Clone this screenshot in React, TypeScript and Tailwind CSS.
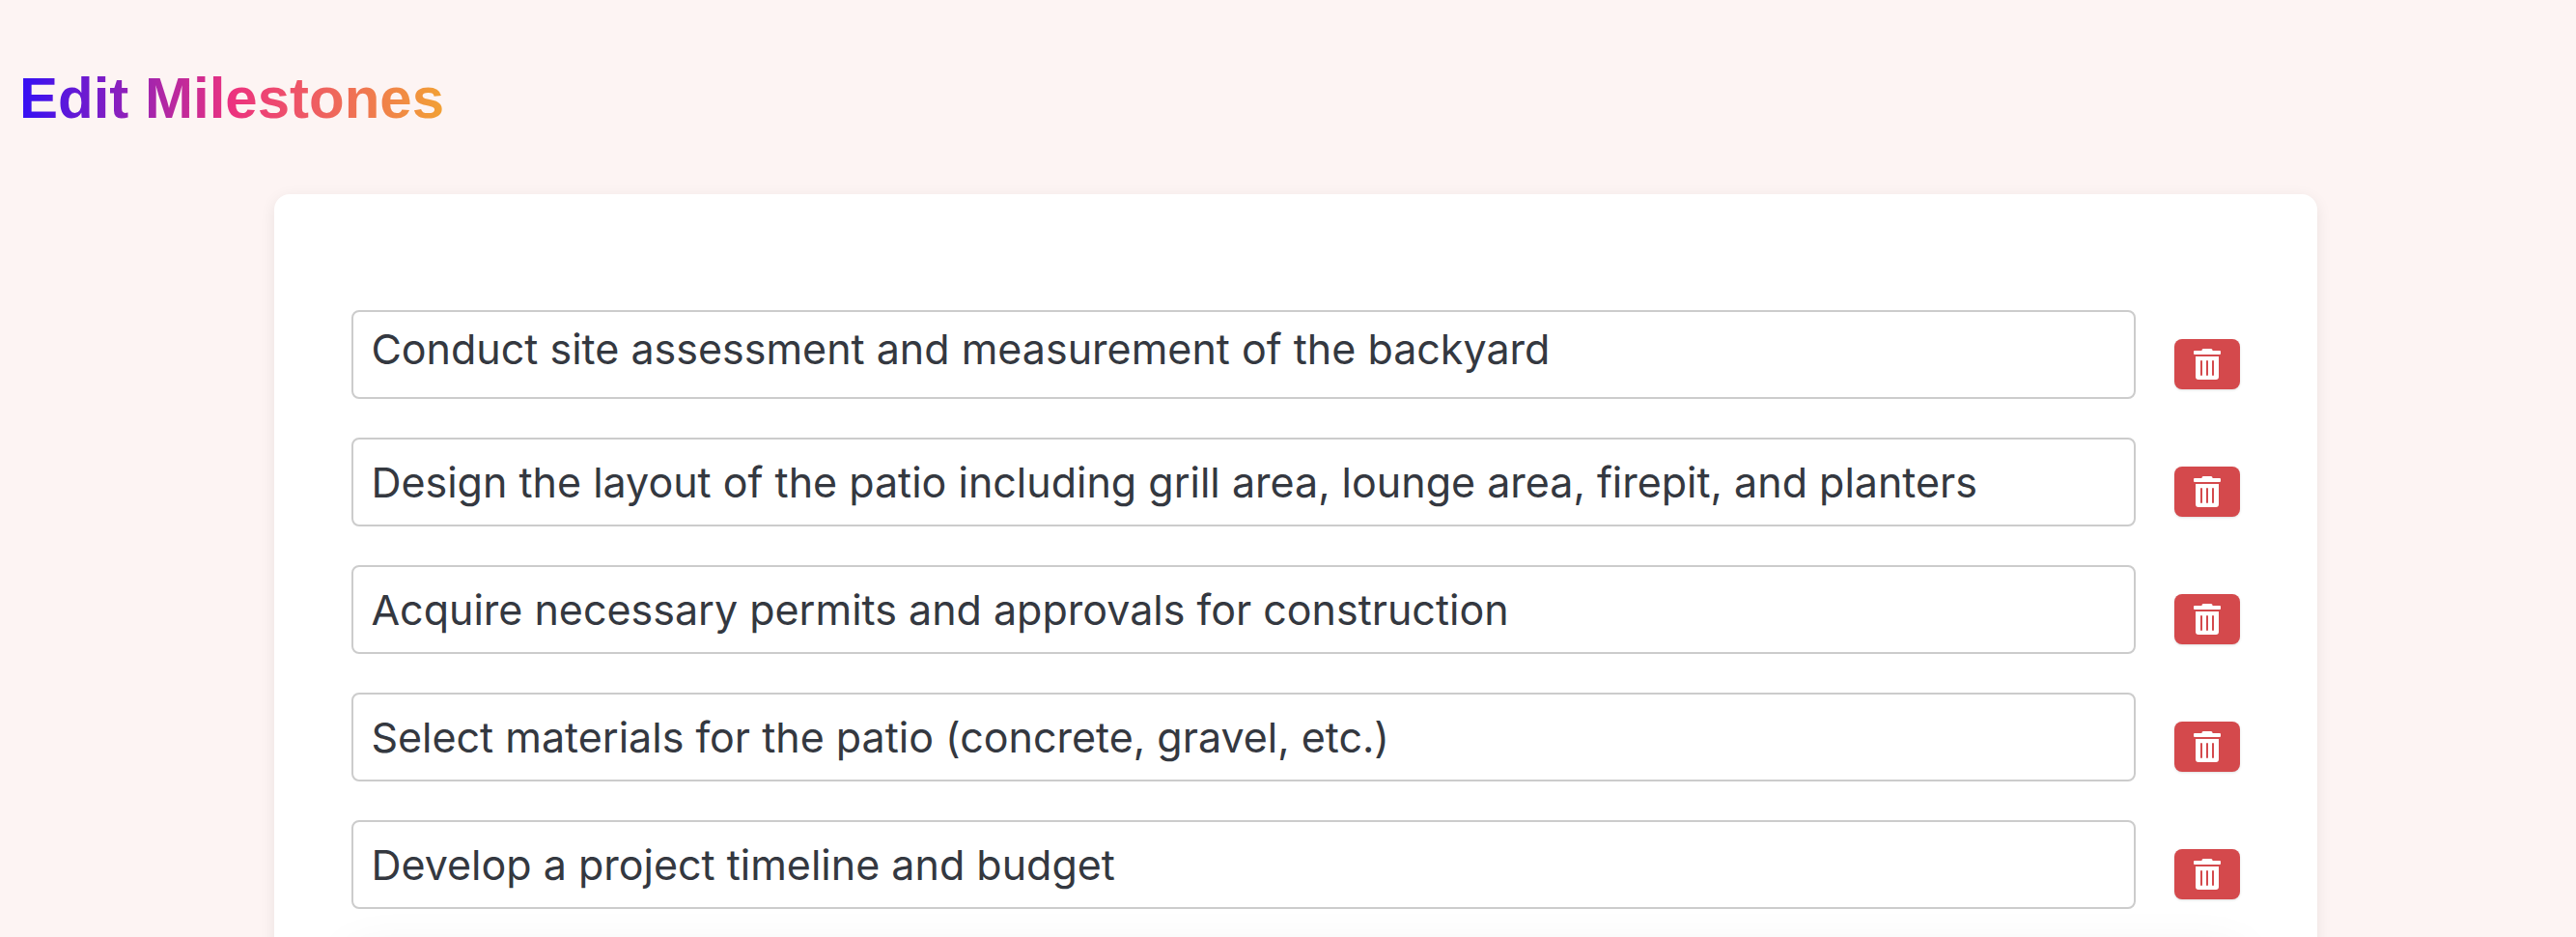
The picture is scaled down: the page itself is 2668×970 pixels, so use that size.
import React, { useState } from 'react'

const initialMilestones = [
  'Conduct site assessment and measurement of the backyard',
  'Design the layout of the patio including grill area, lounge area, firepit, and planters',
  'Acquire necessary permits and approvals for construction',
  'Select materials for the patio (concrete, gravel, etc.)',
  'Develop a project timeline and budget',
]

function TrashIcon() {
  return (
    <svg className="w-7 h-8" viewBox="0 0 28 32" fill="none" aria-hidden="true">
      <path fill="currentColor" d="M10 0h8a1.500 1.500 0 0 1 1.500 1.500V2H27a1 1 0 0 1 1 1v2a1 1 0 0 1-1 1H1a1 1 0 0 1-1-1V3a1 1 0 0 1 1-1h7.500v-.5A1.500 1.500 0 0 1 10 0z" />
      <path fill="currentColor" fillRule="evenodd" d="M2 8h24v21a3 3 0 0 1-3 3H5a3 3 0 0 1-3-3zM8 12a1 1 0 0 0-1 1v14a1 1 0 0 0 2 0V13a1 1 0 0 0-1-1zm6 0a1 1 0 0 0-1 1v14a1 1 0 0 0 2 0V13a1 1 0 0 0-1-1zm6 0a1 1 0 0 0-1 1v14a1 1 0 0 0 2 0V13a1 1 0 0 0-1-1z" />
    </svg>
  )
}

type RowProps = {
  value: string;
  index: number;
  onChange: (value: string) => void;
  onDelete: () => void;
}

function MilestoneRow({ value, index, onChange, onDelete }: RowProps) {
  const fieldClass = "flex-1 min-w-0 h-[92px] px-[18px] border-2 border-[#cccccc] rounded-lg bg-white text-[#343840] text-[43px] font-['Inter',sans-serif] outline-none"
  return (
    <li className="flex items-end gap-10">
      {index === 0
        ? <textarea
            aria-label={`Milestone ${index + 1}`}
            rows={1}
            className={`${fieldClass} py-2 leading-[60px] resize-none overflow-hidden`}
            value={value}
            onChange={(e) => onChange(e.target.value)}
          />
        : <input
            type="text"
            aria-label={`Milestone ${index + 1}`}
            className={fieldClass}
            value={value}
            onChange={(e) => onChange(e.target.value)}
          />
      }
      <button
        type="button"
        aria-label="Delete milestone"
        onClick={onDelete}
        className="flex items-center justify-center w-[68px] h-[52px] mb-2.5 rounded-lg bg-[#d4494c] text-white shadow-sm hover:bg-[#bd3d40]"
      >
        <TrashIcon />
      </button>
    </li>
  )
}

function App() {
  const [milestones, setMilestones] = useState(initialMilestones)

  const updateMilestone = (index: number, value: string) => {
    setMilestones(milestones.map((m, i) => (i === index ? value : m)))
  }

  const deleteMilestone = (index: number) => {
    setMilestones(milestones.filter((_, i) => i !== index))
  }

  return (
    <div className="h-screen overflow-hidden pl-5 pr-1 pt-16 bg-[#fdf4f3]">
      <h1 className="w-fit text-[60px] leading-[76px] font-bold font-['Liberation_Sans',sans-serif] bg-linear-to-r/srgb from-[#3310f5] via-[#ec327f] to-[#f2a134] bg-clip-text text-transparent">
        Edit Milestones
      </h1>
      <main className="w-4/5 mx-auto mt-[61px] px-20 pt-[120px] rounded-2xl bg-white shadow-[0_4px_16px_rgba(0,0,0,0.08)]">
        <ul className="flex flex-col gap-10">
          {milestones.map((milestone, i) => (
            <MilestoneRow
              key={i}
              index={i}
              value={milestone}
              onChange={(value) => updateMilestone(i, value)}
              onDelete={() => deleteMilestone(i)}
            />
          ))}
        </ul>
        {/* panel below the list, only its soft shadow shows above the fold */}
        <div className="h-40 mt-12 bg-white shadow-[0_0_50px_rgba(0,0,0,0.08)]"></div>
      </main>
    </div>
  )
}

export default App
